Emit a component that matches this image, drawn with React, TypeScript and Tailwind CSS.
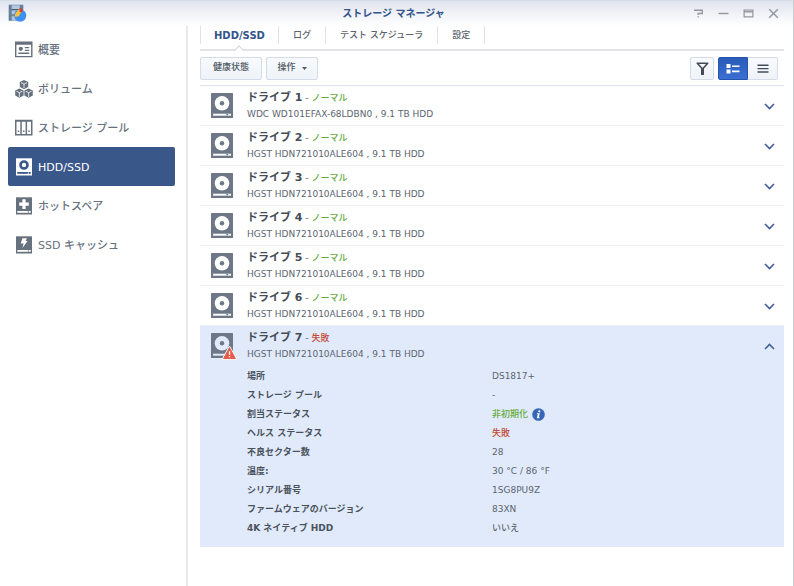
import { useState } from 'react';
import type { ReactNode } from 'react';
import clsx from 'clsx';

type Drive = {
  id: number;
  model: string;
  failed?: boolean;
};

const drives: Drive[] = [
  { id: 1, model: 'WDC WD101EFAX-68LDBN0 , 9.1 TB HDD' },
  { id: 2, model: 'HGST HDN721010ALE604 , 9.1 TB HDD' },
  { id: 3, model: 'HGST HDN721010ALE604 , 9.1 TB HDD' },
  { id: 4, model: 'HGST HDN721010ALE604 , 9.1 TB HDD' },
  { id: 5, model: 'HGST HDN721010ALE604 , 9.1 TB HDD' },
  { id: 6, model: 'HGST HDN721010ALE604 , 9.1 TB HDD' },
  { id: 7, model: 'HGST HDN721010ALE604 , 9.1 TB HDD', failed: true },
];

const tabs = ['HDD/SSD', 'ログ', 'テスト スケジューラ', '設定'];

function AppLogo() {
  return (
    <svg width="19" height="19" viewBox="0 0 19 19" aria-hidden="true">
      <rect x="0.5" y="0.5" width="15" height="16.5" rx="1" fill="#93a9c0" />
      <path d="M1 1h2.5v15.5H1zM12 1h3v15.5h-3z" fill="#65809c" />
      <path d="M4 1.5h7.5v4H4zM4 7h7.5v4H4zM4 12.5h7.5v4H4z" fill="#b4c6d8" />
      <path d="M3.5 5.5h9M3.5 11h9" stroke="#48617b" />
      <circle cx="12.2" cy="11.6" r="6.1" fill="#3f8ff0" />
      <path d="M6.3 12.8 7.5 9.6l2.8-4 2.2-.4 1.2 2.6-3.3 4.6z" fill="#f6c437" />
      <path d="M11.2 4.6h3.2v3.6h-2.6z" fill="#dc3a2c" />
    </svg>
  );
}

function OverviewIcon() {
  return (
    <svg width="18" height="18" viewBox="0 0 18 18" fill="currentColor" aria-hidden="true">
      <path fillRule="evenodd" d="M0 0.5h17.5v15.8H0zM1.4 3.8v11.1h14.7V3.8z" />
      <circle cx="5.8" cy="7.8" r="2.1" />
      <path d="M9.8 6h4.4v1.3H9.8zM9.8 8.7h4.4V10H9.8zM3.3 11.6h10.9V13H3.3z" />
    </svg>
  );
}

function Cube({ x, y }: { x: number; y: number }) {
  return (
    <g transform={`translate(${x} ${y})`}>
      <path d="M4.4 0 8.6 2v5L4.4 9.2.2 7V2z" fill="currentColor" />
      <path d="M1.4 2.6 4.4 4l3-1.4M4.4 4v4.2" fill="none" stroke="#fff" strokeWidth="0.8" />
    </g>
  );
}

function VolumeIcon() {
  return (
    <svg width="18" height="18" viewBox="0 0 18 18" aria-hidden="true">
      <Cube x={4.6} y={0} />
      <Cube x={0} y={8.6} />
      <Cube x={9.2} y={8.6} />
    </svg>
  );
}

function PoolIcon() {
  return (
    <svg width="18" height="18" viewBox="0 0 18 18" fill="currentColor" aria-hidden="true">
      <path
        fillRule="evenodd"
        d="M0 0.7h17.5v15.8H0zM1.5 2.8V15h3.8V2.8zM6.8 2.8V15h3.8V2.8zM12.1 2.8V15H16V2.8z"
      />
      <path d="M2.7 11.6h1.5v1.5H2.7zM8 11.6h1.5v1.5H8zM13.3 11.6h1.5v1.5h-1.5z" />
    </svg>
  );
}

// Drive body shared by the sidebar icons, the glyph goes on top
function DriveBody({ glyph, cut }: { glyph: ReactNode; cut: string }) {
  return (
    <svg width="18" height="18" viewBox="0 0 18 18" aria-hidden="true">
      <path d="M1 0.3h16v17.2H1z" fill="currentColor" />
      <path d="M2.3 14h13.4v1.8H2.3z" fill={cut} />
      <path d="M12.7 14.4h1.3v1h-1.3z" fill="currentColor" />
      {glyph}
    </svg>
  );
}

function DiskNavIcon() {
  return (
    <DriveBody cut="#395788" glyph={<circle cx="9" cy="7" r="3.5" fill="none" stroke="#395788" strokeWidth="2.6" />} />
  );
}

function SpareIcon() {
  return <DriveBody cut="#fff" glyph={<path d="M7.4 2.3h3.2v3.2h3.2v3.2h-3.2v3.2H7.4V8.7H4.2V5.5h3.2z" fill="#fff" />} />;
}

function CacheIcon() {
  return <DriveBody cut="#fff" glyph={<path d="M7.5 2.2h4.4l-1.3 2.9h2l-5.2 7 1.2-4.7H5.7z" fill="#fff" />} />;
}

const navItems = [
  { label: '概要', icon: <OverviewIcon /> },
  { label: 'ボリューム', icon: <VolumeIcon /> },
  { label: 'ストレージ プール', icon: <PoolIcon /> },
  { label: 'HDD/SSD', icon: <DiskNavIcon /> },
  { label: 'ホットスペア', icon: <SpareIcon /> },
  { label: 'SSD キャッシュ', icon: <CacheIcon /> },
];

function DriveIcon({ failed }: { failed?: boolean }) {
  const cut = failed ? '#e1eafb' : '#fff';
  return (
    <span className="relative mt-[3px] block h-[25px] w-[22px] shrink-0">
      <svg width="22" height="25" viewBox="0 0 22 25" aria-hidden="true">
        <rect width="22" height="25" rx="0.5" fill="#6d7785" />
        <circle cx="11" cy="10.3" r="7.3" fill={cut} />
        <circle cx="11" cy="10.3" r="2.2" fill="#6d7785" />
        <path d="M2 20.7h18v2H2z" fill={cut} />
        <path d="M15.3 21h1.8v1.3h-1.8z" fill="#6d7785" />
      </svg>
      {failed && (
        <svg className="absolute -right-1 -bottom-0.5" width="15" height="14" viewBox="0 0 15 14" role="img" aria-label="警告">
          <path
            d="M7.5 1.6 13.4 12.6H1.6z"
            fill="#fff"
            stroke="#fff"
            strokeWidth="2.6"
            strokeLinejoin="round"
          />
          <path d="M7.5 1.6 13.4 12.6H1.6z" fill="#e65a48" stroke="#e65a48" strokeWidth="1" strokeLinejoin="round" />
          <path d="M6.9 5.2h1.3v3.7H6.9zM6.9 9.9h1.3v1.4H6.9z" fill="#fff" />
        </svg>
      )}
    </span>
  );
}

function Chevron({ up }: { up: boolean }) {
  return (
    <svg width="11" height="7" viewBox="0 0 11 7" fill="none" stroke="#3f5f99" strokeWidth="1.6" aria-hidden="true">
      <path d={up ? 'M1 6 5.5 1.5 10 6' : 'M1 1 5.5 5.5 10 1'} />
    </svg>
  );
}

function InfoIcon() {
  return (
    <svg width="13" height="13" viewBox="0 0 13 13" role="img" aria-label="情報">
      <circle cx="6.5" cy="6.5" r="6.3" fill="#3566b8" />
      <circle cx="7.3" cy="3.3" r="1.1" fill="#fff" />
      <path d="M5 5.3h2.8L6.8 9.2h.9l-.3 1H4.8l1-3.9h-1z" fill="#fff" />
    </svg>
  );
}

const details: { label: string; value: ReactNode }[] = [
  { label: '場所', value: 'DS1817+' },
  { label: 'ストレージ プール', value: '-' },
  {
    label: '割当ステータス',
    value: (
      <span className="flex items-center gap-1">
        <span className="text-[#65ac3c]">非初期化</span>
        <InfoIcon />
      </span>
    ),
  },
  { label: 'ヘルス ステータス', value: <span className="text-[#c64a35]">失敗</span> },
  { label: '不良セクター数', value: '28' },
  { label: '温度:', value: '30 °C / 86 °F' },
  { label: 'シリアル番号', value: '1SG8PU9Z' },
  { label: 'ファームウェアのバージョン', value: '83XN' },
  { label: '4K ネイティブ HDD', value: 'いいえ' },
];

function DriveDetails() {
  return (
    <table className="w-full table-fixed text-[9px] leading-[19px] font-medium">
      <tbody>
        {details.map((d) => (
          <tr key={d.label} className="h-[19px]">
            <th scope="row" className="w-1/2 p-0 pl-[47px] text-left font-bold whitespace-nowrap text-[#4a535d]">
              {d.label}
            </th>
            <td className="p-0 text-[#5b6570]">{d.value}</td>
          </tr>
        ))}
      </tbody>
    </table>
  );
}

function DriveRow({ drive, open, onToggle }: { drive: Drive; open: boolean; onToggle: () => void }) {
  return (
    <li className={clsx(open ? 'bg-[#e1eafb] pb-[9px]' : 'border-b border-[#eef0f6]')}>
      <div className={clsx('flex items-start pt-1 pr-[9px] pl-[11px]', open ? 'h-[41px]' : 'h-[39px]')}>
        <DriveIcon failed={drive.failed} />
        <div className="ml-3.5 flex-1 leading-4 font-medium">
          <h3 className="text-[9px] text-[#5b6570]">
            <span className="text-[11px] font-bold text-[#434c56]">ドライブ {drive.id}</span>
            {' - '}
            <span className={drive.failed ? 'text-[#c64a35]' : 'text-[#65ac3c]'}>
              {drive.failed ? '失敗' : 'ノーマル'}
            </span>
          </h3>
          <p className="text-[9px] text-[#5b6570]">{drive.model}</p>
        </div>
        <button
          type="button"
          onClick={onToggle}
          aria-expanded={open}
          aria-label={`ドライブ ${drive.id} の詳細`}
          className="flex h-8 items-center"
        >
          <Chevron up={open} />
        </button>
      </div>
      {open && <DriveDetails />}
    </li>
  );
}

const toolButton =
  'flex h-[23px] items-center justify-center rounded-xs border border-[#d3dce8] bg-gradient-to-b from-[#f8fafd] to-[#eef3f9] text-[9px] font-medium text-[#4f5964]';

export default function StorageManager() {
  const [page, setPage] = useState('HDD/SSD');
  const [tab, setTab] = useState('HDD/SSD');
  const [openDrive, setOpenDrive] = useState<number | null>(7);
  const [view, setView] = useState<'detail' | 'list'>('detail');

  return (
    <div className="flex min-h-screen flex-col border-r border-[#c9ccd0] bg-white font-['DejaVu_Sans','Noto_Sans_CJK_JP',sans-serif] text-[#5b6570]">
      {/* Title bar */}
      <header className="grid h-[26px] grid-cols-[1fr_auto_1fr] items-center border-t border-[#d5dcea] bg-gradient-to-b from-[#e0e5ee] to-white pr-3.5 pl-2">
        <AppLogo />
        <h1 className="text-[10px] font-bold text-[#34548a]">ストレージ マネージャ</h1>
        <div className="flex justify-end gap-3.5 text-[#93979d]">
          <button type="button" aria-label="ヘルプ">
            <svg width="11" height="11" viewBox="0 0 11 11" fill="none" stroke="currentColor" strokeWidth="1.4">
              <path d="M1 2.2h8.3v3.3H5.2V7M5.2 8.2v1.4" />
            </svg>
          </button>
          <button type="button" aria-label="最小化">
            <svg width="11" height="11" viewBox="0 0 11 11" stroke="currentColor" strokeWidth="1.4">
              <path d="M0.5 5.5h10" />
            </svg>
          </button>
          <button type="button" aria-label="最大化">
            <svg width="11" height="11" viewBox="0 0 11 11" fill="currentColor">
              <path fillRule="evenodd" d="M0.5 1.5h10v8h-10zM1.7 4.4v3.9h7.6V4.4z" />
              <path d="M1.7 2.6h7.6v.5H1.7z" fill="#e8ebf0" />
            </svg>
          </button>
          <button type="button" aria-label="閉じる">
            <svg width="11" height="11" viewBox="0 0 11 11" stroke="currentColor" strokeWidth="1.4">
              <path d="M1.2 1.2l8.6 8.6M9.8 1.2 1.2 9.8" />
            </svg>
          </button>
        </div>
      </header>

      <div className="flex flex-1">
        {/* Sidebar */}
        <nav className="w-[188px] shrink-0 border-r-2 border-[#e8eaed] pt-1 pr-[11px] pl-2">
          {navItems.map((item) => (
            <button
              key={item.label}
              type="button"
              onClick={() => setPage(item.label)}
              className={clsx(
                'flex h-[39px] w-full items-center gap-[5px] rounded-xs pl-[7px] text-[11px] font-medium',
                page === item.label ? 'bg-[#395788] text-white' : 'text-[#67717e]',
              )}
            >
              {item.icon}
              <span className="pt-[3px]">{item.label}</span>
            </button>
          ))}
        </nav>

        <main className="min-w-0 flex-1 pr-[9px] pl-3">
          {/* Tabs */}
          <div role="tablist" className="flex h-[25px] items-start border-b-2 border-[#e1e3e7]">
            {tabs.map((t) => (
              <button
                key={t}
                type="button"
                role="tab"
                aria-selected={tab === t}
                onClick={() => setTab(t)}
                className={clsx(
                  'relative h-[18px] border-r border-[#dbe3ee] first:border-l',
                  tab === t ? 'px-[13px] text-[10px] font-bold text-[#34548a]' : 'px-3.5 pt-0.5 text-[9px] font-medium',
                )}
              >
                {t}
                {tab === t && (
                  <svg className="absolute top-[19px] left-1/2 -ml-[5px]" width="10" height="6" viewBox="0 0 10 6">
                    <path d="M0 6 5 1l5 5" fill="#fff" stroke="#d5d8dd" strokeWidth="1.2" />
                  </svg>
                )}
              </button>
            ))}
          </div>

          {/* Toolbar */}
          <div className="flex h-[35px] items-center gap-1 border-b border-[#dfe3ee] pr-1.5">
            <button type="button" className={clsx(toolButton, 'w-[62px]')}>
              健康状態
            </button>
            <button type="button" className={clsx(toolButton, 'w-[52px] gap-1.5')}>
              操作
              <svg width="5" height="3" viewBox="0 0 5 3" fill="currentColor" aria-hidden="true">
                <path d="M0 0h5L2.5 3z" />
              </svg>
            </button>
            <div className="ml-auto flex gap-1">
              <button type="button" aria-label="フィルタ" className={clsx(toolButton, 'w-6')}>
                <svg width="13" height="13" viewBox="0 0 13 13" fill="none" stroke="#434c56" strokeWidth="1.6">
                  <path d="M1.3 1.2h10.4L7.2 6.3v6H5.8v-6z" strokeLinejoin="round" />
                </svg>
              </button>
              <div className="flex">
                <button
                  type="button"
                  aria-label="詳細表示"
                  aria-pressed={view === 'detail'}
                  onClick={() => setView('detail')}
                  className="flex h-[23px] w-[30px] items-center justify-center rounded-l-xs border border-[#2555ae] bg-gradient-to-b from-[#2a5bb8] to-[#3a6fd2]"
                >
                  <svg width="14" height="11" viewBox="0 0 14 11" fill="#fff">
                    <path d="M0.5 1h4v4h-4zM6 2.5h7.5v1.6H6zM0.5 6.5h4v4h-4zM6 7.6h7.5v1.6H6z" />
                  </svg>
                </button>
                <button
                  type="button"
                  aria-label="リスト表示"
                  aria-pressed={view === 'list'}
                  onClick={() => setView('list')}
                  className={clsx(toolButton, 'w-[30px] rounded-l-none border-l-0')}
                >
                  <svg width="12" height="9" viewBox="0 0 12 9" fill="#434c56">
                    <path d="M0.5 0.5h11v1.4h-11zM0.5 3.9h11v1.4h-11zM0.5 7.3h11v1.4h-11z" />
                  </svg>
                </button>
              </div>
            </div>
          </div>

          <ul>
            {drives.map((drive) => (
              <DriveRow
                key={drive.id}
                drive={drive}
                open={openDrive === drive.id}
                onToggle={() => setOpenDrive(openDrive === drive.id ? null : drive.id)}
              />
            ))}
          </ul>
        </main>
      </div>
    </div>
  );
}
